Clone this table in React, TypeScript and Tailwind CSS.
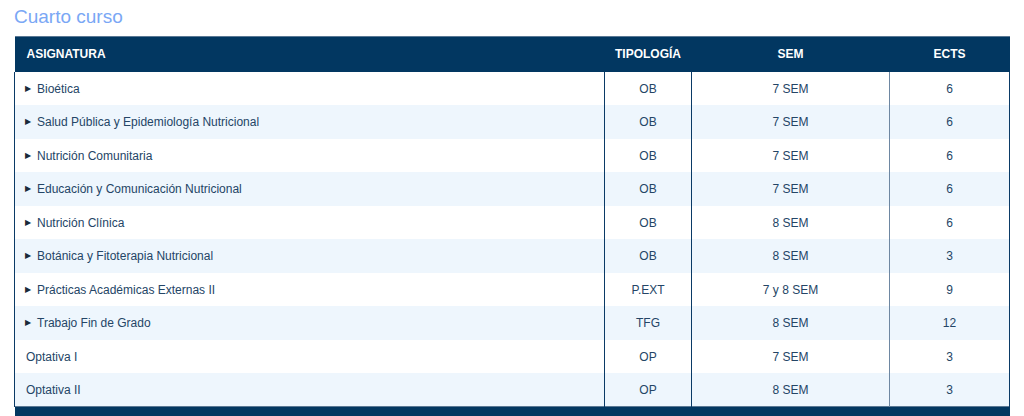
import React from "react";

const rows: { name: string; arrow: boolean; tip: string; sem: string; ects: string }[] = [
  { name: "Bioética", arrow: true, tip: "OB", sem: "7 SEM", ects: "6" },
  { name: "Salud Pública y Epidemiología Nutricional", arrow: true, tip: "OB", sem: "7 SEM", ects: "6" },
  { name: "Nutrición Comunitaria", arrow: true, tip: "OB", sem: "7 SEM", ects: "6" },
  { name: "Educación y Comunicación Nutricional", arrow: true, tip: "OB", sem: "7 SEM", ects: "6" },
  { name: "Nutrición Clínica", arrow: true, tip: "OB", sem: "8 SEM", ects: "6" },
  { name: "Botánica y Fitoterapia Nutricional", arrow: true, tip: "OB", sem: "8 SEM", ects: "3" },
  { name: "Prácticas Académicas Externas II", arrow: true, tip: "P.EXT", sem: "7 y 8 SEM", ects: "9" },
  { name: "Trabajo Fin de Grado", arrow: true, tip: "TFG", sem: "8 SEM", ects: "12" },
  { name: "Optativa I", arrow: false, tip: "OP", sem: "7 SEM", ects: "3" },
  { name: "Optativa II", arrow: false, tip: "OP", sem: "8 SEM", ects: "3" },
];

export default function App() {
  return (
    <div className="w-[1024px] h-[416px] overflow-hidden bg-white font-['Liberation_Sans',Arial,sans-serif]">
      <div className="pl-[14px] pr-[15px] pt-[5px]">
        <h2 className="text-[19px] leading-[24px] text-[#7aa7f5] font-normal">Cuarto curso</h2>
        <table className="mt-[7px] w-[995px] border-collapse table-fixed">
          <colgroup>
            <col className="w-[590px]" />
            <col className="w-[87px]" />
            <col className="w-[198px]" />
            <col className="w-[120px]" />
          </colgroup>
          <thead>
            <tr className="bg-[#023761] h-[35px] border-t border-t-[#5a7894]">
              <th className="text-left pl-[12px] text-[12px] font-bold text-white">ASIGNATURA</th>
              <th className="text-center text-[12px] font-bold text-white">TIPOLOGÍA</th>
              <th className="text-center text-[12px] font-bold text-white">SEM</th>
              <th className="text-center text-[12px] font-bold text-white">ECTS</th>
            </tr>
          </thead>
          <tbody>
            {rows.map((r, i) => (
              <tr key={i} className={`h-[33.5px] text-[12px] text-[#244566] ${i % 2 === 1 ? "bg-[#eef6fd]" : "bg-white"}`}>
                <td className="pl-[10px] pt-[1px] border-l border-l-[#0a3a66]">
                  {r.arrow ? (
                    <span className="flex items-center">
                      <span className="text-[8px] mr-[6px] text-[#1a2a3a]">▶</span>
                      <span>{r.name}</span>
                    </span>
                  ) : (
                    <span className="pl-[1px]">{r.name}</span>
                  )}
                </td>
                <td className="text-center pt-[1px] border-l border-l-[#0a3a66]">{r.tip}</td>
                <td className="text-center pt-[1px] border-l border-l-[#0a3a66]">{r.sem}</td>
                <td className="text-center pt-[1px] border-l border-l-[#6e87a2] border-r border-r-[#0a3a66]">{r.ects}</td>
              </tr>
            ))}
            <tr className="h-[20px] bg-[#023761] border-t border-t-[#5a7894]">
              <td colSpan={4}></td>
            </tr>
          </tbody>
        </table>
      </div>
    </div>
  );
}
